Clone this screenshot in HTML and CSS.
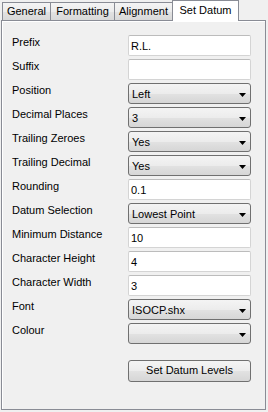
FILE: index.html
```html
<!DOCTYPE html>
<html>
<head>
<meta charset="utf-8">
<link rel="stylesheet" href="styles.css">
</head>
<body>
<div class="tabs">
  <div class="tab tab-general">General</div>
  <div class="tab tab-formatting">Formatting</div>
  <div class="tab tab-alignment">Alignment</div>
  <div class="tab tab-datum active">Set Datum</div>
</div>
<div class="panel">
  <div class="form">
    <div class="lbl">Prefix</div>
    <div class="field">R.L.</div>
    <div class="lbl">Suffix</div>
    <div class="field"></div>
    <div class="lbl">Position</div>
    <div class="select"><span class="val">Left</span><svg class="arrow" width="7" height="4" viewBox="0 0 7 4"><path d="M0 0H7L3.5 4Z" fill="#000"/></svg></div>
    <div class="lbl">Decimal Places</div>
    <div class="select"><span class="val">3</span><svg class="arrow" width="7" height="4" viewBox="0 0 7 4"><path d="M0 0H7L3.5 4Z" fill="#000"/></svg></div>
    <div class="lbl">Trailing Zeroes</div>
    <div class="select"><span class="val">Yes</span><svg class="arrow" width="7" height="4" viewBox="0 0 7 4"><path d="M0 0H7L3.5 4Z" fill="#000"/></svg></div>
    <div class="lbl">Trailing Decimal</div>
    <div class="select"><span class="val">Yes</span><svg class="arrow" width="7" height="4" viewBox="0 0 7 4"><path d="M0 0H7L3.5 4Z" fill="#000"/></svg></div>
    <div class="lbl">Rounding</div>
    <div class="field">0.1</div>
    <div class="lbl">Datum Selection</div>
    <div class="select"><span class="val">Lowest Point</span><svg class="arrow" width="7" height="4" viewBox="0 0 7 4"><path d="M0 0H7L3.5 4Z" fill="#000"/></svg></div>
    <div class="lbl">Minimum Distance</div>
    <div class="field">10</div>
    <div class="lbl">Character Height</div>
    <div class="field">4</div>
    <div class="lbl">Character Width</div>
    <div class="field">3</div>
    <div class="lbl">Font</div>
    <div class="select"><span class="val">ISOCP.shx</span><svg class="arrow" width="7" height="4" viewBox="0 0 7 4"><path d="M0 0H7L3.5 4Z" fill="#000"/></svg></div>
    <div class="lbl">Colour</div>
    <div class="select"><span class="val"></span><svg class="arrow" width="7" height="4" viewBox="0 0 7 4"><path d="M0 0H7L3.5 4Z" fill="#000"/></svg></div>
    <div class="btn">Set Datum Levels</div>
  </div>
</div>
</body>
</html>
```
FILE: styles.css
```css
html, body {
  margin: 0;
  padding: 0;
}
body {
  background: #f0f0f0;
  font-family: "Liberation Sans", Arial, sans-serif;
  font-size: 11px;
  color: #000;
  width: 268px;
  height: 412px;
  overflow: hidden;
}
.tabs {
  display: flex;
  align-items: flex-end;
  height: 20px;
  padding-left: 2px;
  position: relative;
  z-index: 1;
}
.tab {
  box-sizing: border-box;
  height: 18px;
  border: 1px solid #898c95;
  border-bottom: 0;
  background: linear-gradient(#f4f4f4, #ececec 50%, #e2e2e2 51%, #d9d9d9);
  line-height: 17px;
  text-align: center;
  margin-left: -1px;
}
.tab-general { width: 49px; margin-left: 0; }
.tab-formatting { width: 65px; }
.tab-alignment { width: 59px; }
.tab-datum { width: 67px; }
.tab.active {
  height: 21px;
  margin-bottom: -1px;
  background: #fff;
  line-height: 19px;
}
.panel {
  box-sizing: border-box;
  margin-left: 1px;
  width: 265px;
  height: 390px;
  border: 1px solid #898c95;
  background: #f0f0f0;
  box-shadow: inset 1px 1px 0 #fff;
}
.form {
  display: grid;
  grid-template-columns: 116px 123px;
  row-gap: 3px;
  padding: 14px 0 0 10px;
}
.lbl {
  height: 21px;
  line-height: 13px;
  padding-top: 1px;
  box-sizing: border-box;
}
.field {
  box-sizing: border-box;
  height: 21px;
  border: 1px solid #d4d4d4;
  border-top-color: #bcbcbc;
  border-radius: 2px;
  background: #fff;
  padding: 1px 2px 0;
  line-height: 19px;
}
.select {
  box-sizing: border-box;
  height: 21px;
  border: 1px solid #707070;
  border-radius: 3px;
  background: linear-gradient(#f4f4f4, #ececec 50%, #e2e2e2 51%, #d6d6d6);
  display: flex;
  align-items: center;
  padding: 2px 4px 0 3px;
}
.val {
  flex: 1;
  line-height: 13px;
}
.arrow {
  display: block;
  margin-top: 1px;
}
.btn {
  grid-column: 2;
  margin-top: 13px;
  box-sizing: border-box;
  height: 22px;
  border: 1px solid #707070;
  border-radius: 3px;
  background: linear-gradient(#f4f4f4, #ececec 50%, #e2e2e2 51%, #d6d6d6);
  text-align: center;
  line-height: 19px;
}
```
